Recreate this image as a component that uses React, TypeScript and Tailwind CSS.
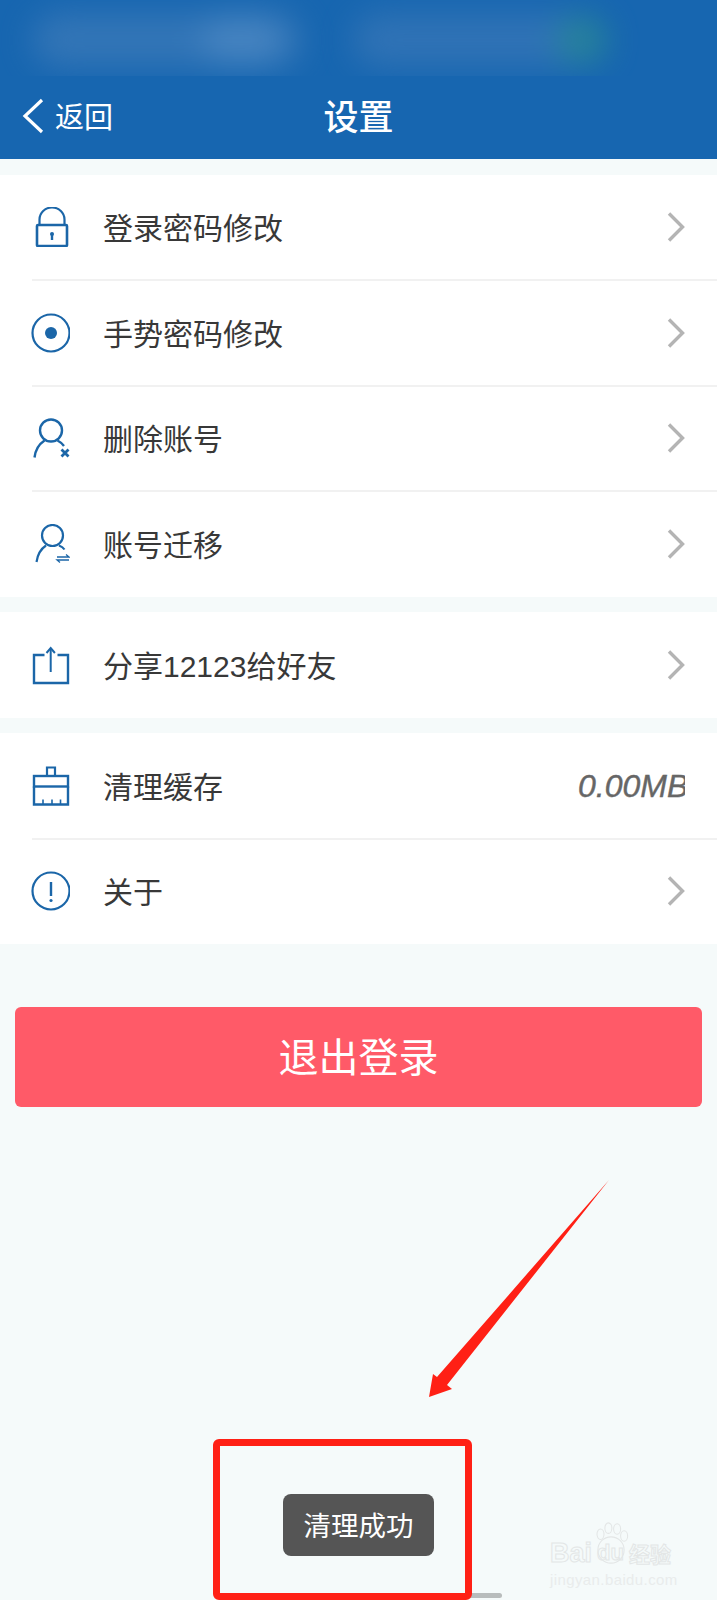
import React from 'react';

const CJK = 'font-["Noto_Sans_CJK_SC",sans-serif]';

const iconProps = {
  width: 40,
  height: 40,
  viewBox: '0 0 40 40',
  fill: 'none',
  stroke: '#1b66a8',
  strokeWidth: 2.2,
  className: 'shrink-0',
};

const LockIcon = () => (
  <svg {...iconProps}>
    <path d="M9.500 18V12.500a12.500 12 0 0 1 25 0V18" />
    <rect x="7" y="18" width="30" height="21" rx="1" strokeWidth="2.600" />
    <circle cx="22" cy="27" r="2" fill="#1b66a8" stroke="none" />
    <path d="M22 27v6" strokeWidth="2.400" />
  </svg>
);

const GestureIcon = () => (
  <svg {...iconProps}>
    <circle cx="21" cy="20" r="18.500" />
    <circle cx="21" cy="20" r="6" fill="#1b66a8" stroke="none" />
  </svg>
);

const UserDeleteIcon = () => (
  <svg {...iconProps}>
    <circle cx="21" cy="12.500" r="11" strokeWidth="2.400" />
    <path d="M4.500 39.500C5.500 31 10 25.500 14.500 22.500M27.500 22.500c3 1.500 5 3.500 6.500 5.500" strokeWidth="2.400" />
    <path d="M31.500 31.500l7 7M38.500 31.500l-7 7" strokeWidth="2.800" />
  </svg>
);

const UserMoveIcon = () => (
  <svg {...iconProps}>
    <circle cx="22.500" cy="11.500" r="10.500" strokeWidth="2.200" />
    <path d="M6.500 38C7.500 31 11.500 24.500 16 21.500M29 21.500c2.500 1 4.500 2.500 5.500 4" strokeWidth="2.200" />
    <path d="M27 33h12l-3-2.500M39 36H27l3 2.500" strokeWidth="1.300" />
  </svg>
);

const ShareIcon = () => (
  <svg {...iconProps}>
    <path d="M14.500 10H4v28h34V10H27.500" strokeWidth="2.400" />
    <path d="M20.700 27V4" strokeWidth="2" />
    <path d="M16.500 8l4.200-5 4.200 5" strokeWidth="2" />
  </svg>
);

const BroomIcon = () => (
  <svg {...iconProps}>
    <path d="M17 10V1.500h8V10" strokeWidth="2.200" />
    <rect x="4" y="10" width="34" height="10.500" strokeWidth="2.400" />
    <path d="M4 20.500V38.500H38V20.500" strokeWidth="2.400" />
    <path d="M13 33.500v5M22 33.500v5M30.500 33.500v5" strokeWidth="1.600" />
  </svg>
);

const InfoIcon = () => (
  <svg {...iconProps}>
    <circle cx="21" cy="20" r="18.500" />
    <path d="M21 11v14" strokeWidth="2.400" />
    <circle cx="21" cy="29.500" r="1.600" fill="#1b66a8" stroke="none" />
  </svg>
);

const Chevron = () => (
  <svg width="18" height="30" viewBox="0 0 18 30" fill="none" stroke="#b4b4b4" strokeWidth="3.400" className="shrink-0">
    <path d="M2 1.500L15.500 15 2 28.500" />
  </svg>
);

interface RowData {
  label: string;
  icon: React.ReactNode;
  value?: string;
}

const Row = ({ label, icon, value, last }: RowData & { last: boolean }) => (
  <div className="relative flex h-[105.500px] items-center pl-[30px] pr-[32px]">
    <div className="w-[40px] shrink-0">{icon}</div>
    <span className="ml-[33px] flex-1 pt-[3px] font-['Liberation_Sans','Noto_Sans_CJK_SC',sans-serif] text-[30px] text-[#383838]">
      {label}
    </span>
    {value ? (
      <span className="w-[107px] overflow-hidden font-['Liberation_Sans',sans-serif] text-[32px] whitespace-nowrap text-[#666666] italic [-webkit-text-stroke:0.4px_#666666]">
        {value}
      </span>
    ) : (
      <Chevron />
    )}
    {!last && <div className="absolute right-0 -bottom-[1px] left-[32px] h-[2px] bg-[#f1f1f1]" />}
  </div>
);

const Group = ({ rows }: { rows: RowData[] }) => (
  <div className="mt-[15.500px] bg-white">
    {rows.map((r, i) => (
      <Row key={r.label} {...r} last={i === rows.length - 1} />
    ))}
  </div>
);

export default function App() {
  return (
    <div className="relative h-[1600px] w-[717px] overflow-hidden bg-[#f5fafa]">
      {/* Header, status bar is blurred out in the original */}
      <div className="bg-[#1766b0]">
        <div className="flex h-[76px] items-center gap-[50px] overflow-hidden pt-[4px] pl-[32px]">
          <div className="relative h-[54px] w-[270px] rounded-full bg-[#3f7cba] opacity-70 blur-[16px]">
            <div className="absolute top-[4px] right-[20px] h-[46px] w-[80px] rounded-full bg-[#5b91c8]" />
          </div>
          <div className="relative h-[54px] w-[255px] rounded-full bg-[#3a78b8] opacity-70 blur-[16px]">
            <div className="absolute top-[4px] right-0 h-[46px] w-[50px] rounded-full bg-[#2d9090]" />
          </div>
        </div>
        <div className="relative flex h-[83px] items-center justify-center pb-[5px]">
          <div className="absolute top-0 bottom-[3px] left-[22px] flex items-center">
            <svg width="22" height="36" viewBox="0 0 22 36" fill="none" stroke="white" strokeWidth="3.200">
              <path d="M20 2L3 18l17 16" />
            </svg>
            <span className={`ml-[11px] text-[29px] text-white ${CJK}`}>返回</span>
          </div>
          <span className={`text-[35px] font-medium text-white ${CJK}`}>设置</span>
        </div>
      </div>

      <Group
        rows={[
          { label: '登录密码修改', icon: <LockIcon /> },
          { label: '手势密码修改', icon: <GestureIcon /> },
          { label: '删除账号', icon: <UserDeleteIcon /> },
          { label: '账号迁移', icon: <UserMoveIcon /> },
        ]}
      />
      <Group rows={[{ label: '分享12123给好友', icon: <ShareIcon /> }]} />
      <Group
        rows={[
          { label: '清理缓存', icon: <BroomIcon />, value: '0.00MB' },
          { label: '关于', icon: <InfoIcon /> },
        ]}
      />

      <div className="mx-[15px] mt-[63px] flex h-[100px] items-center justify-center rounded-[6px] bg-[#ff5a68] pb-[4px]">
        <span className={`text-[40px] text-white ${CJK}`}>退出登录</span>
      </div>

      {/* Toast */}
      <div className="absolute top-[1494px] left-[283px] flex h-[62px] w-[151px] items-center justify-center rounded-[8px] bg-[#555555]">
        <span className={`text-[27.500px] text-white ${CJK}`}>清理成功</span>
      </div>

      {/* Home indicator */}
      <div className="absolute top-[1593px] left-[465px] h-[5px] w-[37px] rounded-full bg-[#b8bcbc]" />

      {/* Red annotation: box and arrow */}
      <div className="absolute top-[1439px] left-[213px] h-[161px] w-[259px] rounded-[6px] border-[7px] border-[#ff2015]" />
      <svg className="absolute top-[1170px] left-[420px]" width="200" height="235" viewBox="0 0 200 235">
        <polygon points="189,10 27,215 32,219 9,227 13,204 17,207" fill="#ff2015" />
      </svg>

      {/* Baidu watermark */}
      <div className="absolute top-[1538px] left-[550px] flex w-[130px] flex-col items-start">
        <div className="flex items-center font-['Liberation_Sans',sans-serif] text-[27px] leading-[30px] font-bold text-transparent [-webkit-text-stroke:1px_#e3e6e6]">
          <span>Bai</span>
          <span className="relative ml-[5px] text-[22px]">
            <svg className="absolute -top-[16px] -left-[5px]" width="38" height="42" viewBox="0 0 42 48" fill="none" stroke="#e3e6e6" strokeWidth="1.200">
              <circle cx="21" cy="32" r="15" />
              <ellipse cx="9" cy="14" rx="4" ry="6" />
              <ellipse cx="18" cy="7" rx="4" ry="6" />
              <ellipse cx="28" cy="8" rx="4" ry="6" />
              <ellipse cx="36" cy="16" rx="4" ry="6" />
            </svg>
            du
          </span>
          <span className={`ml-[5px] text-[21px] whitespace-nowrap ${CJK}`}>经验</span>
        </div>
        <span className="mt-[2px] font-['Liberation_Sans',sans-serif] text-[15px] leading-[20px] tracking-[0.4px] whitespace-nowrap text-[#e9ecec]">
          jingyan.baidu.com
        </span>
      </div>
    </div>
  );
}
